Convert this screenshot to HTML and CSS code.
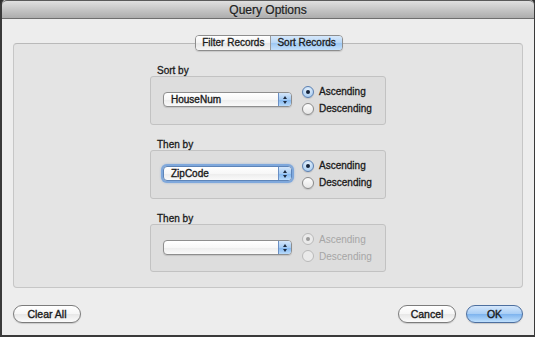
FILE: index.html
```html
<!DOCTYPE html>
<html>
<head>
    <meta charset="UTF-8">
    <title>Query Options</title>
    <link rel="stylesheet" href="styles.css">
</head>
<body>
    <div class="window">
        <div class="titlebar">Query Options</div>

        <div class="content">
            <div class="segmented">
                <span class="segment">Filter Records</span>
                <span class="segment selected">Sort Records</span>
            </div>

            <div class="panel">
                <!-- Sort levels -->
                <div class="group">
                    <div class="group-label">Sort by</div>
                    <div class="group-box">
                        <div class="popup"><span class="popup-text">HouseNum</span><span class="popup-arrows"></span></div>
                        <div class="radios">
                            <label class="radio"><span class="dot on"></span>Ascending</label>
                            <label class="radio"><span class="dot"></span>Descending</label>
                        </div>
                    </div>
                </div>

                <div class="group">
                    <div class="group-label">Then by</div>
                    <div class="group-box">
                        <div class="popup focus"><span class="popup-text">ZipCode</span><span class="popup-arrows"></span></div>
                        <div class="radios">
                            <label class="radio"><span class="dot on"></span>Ascending</label>
                            <label class="radio"><span class="dot"></span>Descending</label>
                        </div>
                    </div>
                </div>

                <div class="group">
                    <div class="group-label">Then by</div>
                    <div class="group-box">
                        <div class="popup"><span class="popup-text"></span><span class="popup-arrows"></span></div>
                        <div class="radios disabled">
                            <label class="radio"><span class="dot on"></span>Ascending</label>
                            <label class="radio"><span class="dot"></span>Descending</label>
                        </div>
                    </div>
                </div>
            </div>

            <div class="footer">
                <button class="btn clear-all">Clear All</button>
                <div class="spacer"></div>
                <button class="btn cancel">Cancel</button>
                <button class="btn default">OK</button>
            </div>
        </div>
    </div>
</body>
</html>
```

FILE: styles.css
```css
* {
    margin: 0;
    padding: 0;
    box-sizing: border-box;
}

body {
    width: 535px;
    height: 337px;
    overflow: hidden;
    background: #2e2e2e;
    font-family: "Liberation Sans", Arial, sans-serif;
    font-size: 10px;
    color: #1a1a1a;
}

.window {
    width: 535px;
    height: 337px;
    border: 1px solid #3a3a3a;
    border-left-width: 2px;
    border-top: none;
    border-bottom-width: 2px;
    border-radius: 5px 5px 0 0;
    background: #ededed;
    display: flex;
    flex-direction: column;
    overflow: hidden;
}

.titlebar {
    height: 19px;
    line-height: 19px;
    text-align: center;
    font-size: 12px;
    color: #222;
    background: linear-gradient(#e0e0e0, #c6c6c6 50%, #adadad);
    border-bottom: 1px solid #6f6f6f;
    border-top: 1px solid #5a5a5a;
    border-radius: 5px 5px 0 0;
    text-shadow: 0 1px 0 rgba(255,255,255,0.4);
    -webkit-text-stroke: 0.25px #222;
}

.content {
    flex: 1;
    padding: 16px 11px 0 11px;
    display: flex;
    flex-direction: column;
}

/* tab switcher sitting on the panel border */
.segmented {
    align-self: center;
    display: flex;
    height: 16px;
    margin-bottom: -8px;
    margin-left: 2px;
    position: relative;
    z-index: 1;
    border: 1px solid #8d8d8d;
    border-radius: 4px;
    overflow: hidden;
    box-shadow: 0 1px 1px rgba(0,0,0,0.12);
}

.segment {
    padding: 0 6px;
    line-height: 14px;
    background: linear-gradient(#ffffff, #f3f3f3 50%, #e6e6e6 51%, #f6f6f6);
    -webkit-text-stroke: 0.3px #1a1a1a;
}

.segment + .segment {
    border-left: 1px solid #9a9a9a;
}

.segment.selected {
    background: linear-gradient(#d6e8fb, #b6d6f6 50%, #9cc7f3 51%, #c4e0fb);
}

.panel {
    height: 245px;
    border: 1px solid #c6c6c6;
    border-top-color: #b9b9b9;
    border-radius: 4px;
    background: #e4e4e4;
    padding-top: 22px;
    display: flex;
    flex-direction: column;
    align-items: center;
    gap: 15px;
}

.group {
    width: 236px;
}

.group-label {
    height: 10px;
    line-height: 10px;
    padding-left: 7px;
    -webkit-text-stroke: 0.3px #1a1a1a;
}

.group-box {
    height: 49px;
    border: 1px solid #c2c2c2;
    border-radius: 3px;
    background: #dddddd;
    display: flex;
    align-items: center;
    padding-left: 12px;
    gap: 10px;
}

.group:last-child .group-box {
    height: 48px;
}

.popup {
    width: 129px;
    height: 15px;
    margin-top: -2px;
    border: 1px solid #8e8e8e;
    border-radius: 4px;
    background: linear-gradient(#ffffff, #f7f7f7 50%, #ececec 51%, #fafafa);
    display: flex;
    overflow: hidden;
    box-shadow: 0 1px 1px rgba(0,0,0,0.12);
}

.popup.focus {
    box-shadow: 0 0 0 2px #7fa8dc, 0 0 2px 2px rgba(90,140,210,0.5);
    border-color: #5d84b8;
}

.popup-text {
    flex: 1;
    padding-left: 7px;
    line-height: 13px;
    -webkit-text-stroke: 0.35px #1a1a1a;
}

.popup-arrows {
    width: 13px;
    border-left: 1px solid #6a8fc4;
    background: linear-gradient(#d4e6fa, #a5cbf3 50%, #80b5ef 51%, #b9dbfb);
    position: relative;
}

.popup-arrows::before,
.popup-arrows::after {
    content: "";
    position: absolute;
    left: 4px;
    border-left: 2.5px solid transparent;
    border-right: 2.5px solid transparent;
}

.popup-arrows::before {
    top: 3px;
    border-bottom: 3px solid #1c2b40;
}

.popup-arrows::after {
    top: 8px;
    border-top: 3px solid #1c2b40;
}

.radios {
    display: flex;
    flex-direction: column;
    gap: 5px;
    margin-top: -1px;
}

.radio {
    display: flex;
    align-items: center;
    gap: 5px;
    height: 12px;
    -webkit-text-stroke: 0.3px #1a1a1a;
}

.dot {
    width: 12px;
    height: 12px;
    border-radius: 50%;
    border: 1px solid #8a8a8a;
    background: linear-gradient(#fdfdfd, #e6e6e6);
    box-shadow: 0 1px 1px rgba(0,0,0,0.12);
    position: relative;
}

.dot.on {
    border-color: #5b7fb0;
    background: radial-gradient(circle at 50% 30%, #e6f1fc, #9cc5ef);
}

.dot.on::after {
    content: "";
    position: absolute;
    left: 3px;
    top: 3px;
    width: 4px;
    height: 4px;
    border-radius: 50%;
    background: #14233a;
}

.radios.disabled .radio {
    color: #a6a6a6;
    -webkit-text-stroke: 0;
}

.radios.disabled .dot {
    border-color: #b9b9b9;
    background: #eaeaea;
    box-shadow: none;
}

.radios.disabled .dot.on::after {
    background: #9a9a9a;
}

.footer {
    display: flex;
    align-items: center;
    padding-top: 17px;
    gap: 10px;
}

.spacer {
    flex: 1;
}

.btn {
    height: 18px;
    border: 1px solid #7c7c7c;
    border-radius: 9px;
    font-family: "Liberation Sans", Arial, sans-serif;
    font-size: 10.5px;
    color: #1a1a1a;
    background: linear-gradient(#ffffff, #f6f6f6 50%, #e7e7e7 51%, #fbfbfb);
    box-shadow: 0 1px 1px rgba(0,0,0,0.15);
    -webkit-text-stroke: 0.35px #1a1a1a;
}

.clear-all {
    width: 68px;
}

.cancel {
    width: 58px;
}

.default {
    width: 57px;
    border-color: #4d6f9f;
    background: linear-gradient(#d5e7fb, #a7cdf5 50%, #7db3ee 51%, #bfe0fd);
}
```
